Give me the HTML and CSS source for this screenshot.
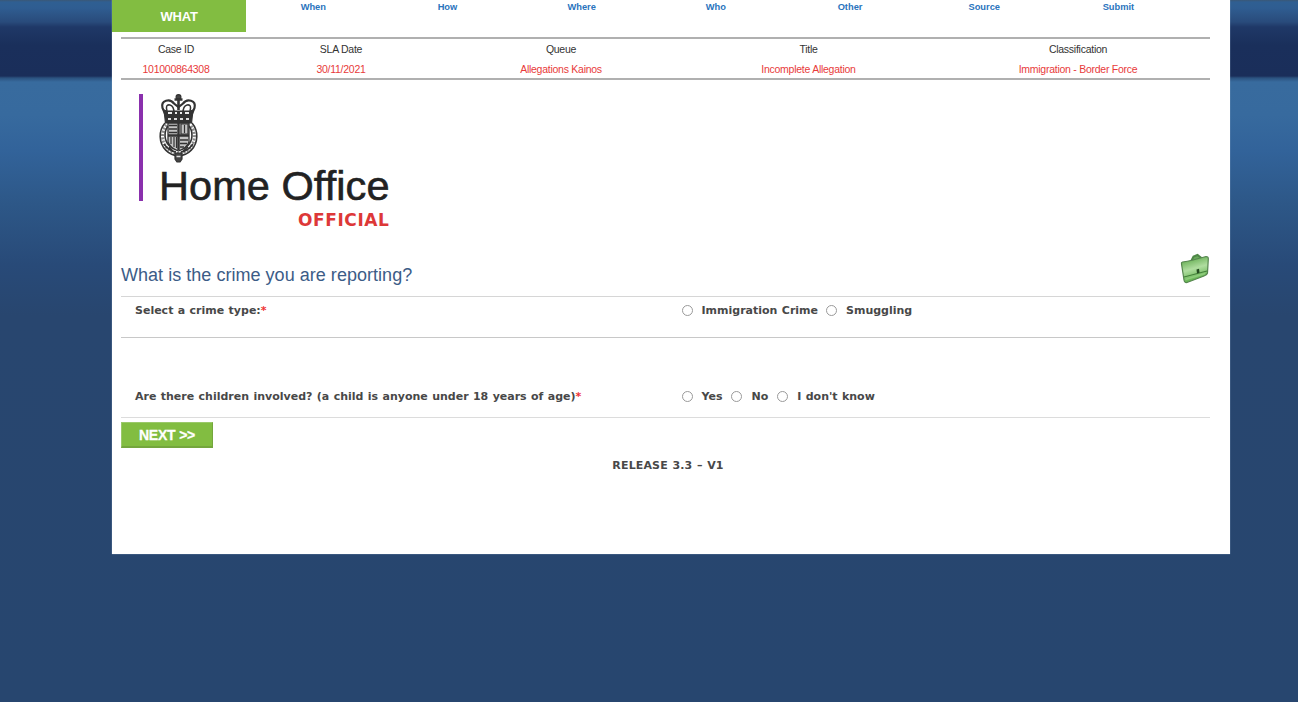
FILE: index.html
```html
<!DOCTYPE html>
<html lang="en">
<head>
<meta charset="utf-8">
<title>Home Office – Report a crime</title>
<link rel="stylesheet" href="styles.css">
</head>
<body>
<main class="page">
  <nav class="steps">
    <a class="step active">WHAT</a>
    <a class="step">When</a>
    <a class="step">How</a>
    <a class="step">Where</a>
    <a class="step">Who</a>
    <a class="step">Other</a>
    <a class="step">Source</a>
    <a class="step">Submit</a>
  </nav>
  <section class="case">
    <div class="cell"><span>Case ID</span><span class="value">101000864308</span></div>
    <div class="cell"><span>SLA Date</span><span class="value">30/11/2021</span></div>
    <div class="cell"><span>Queue</span><span class="value">Allegations Kainos</span></div>
    <div class="cell"><span>Title</span><span class="value">Incomplete Allegation</span></div>
    <div class="cell"><span>Classification</span><span class="value">Immigration - Border Force</span></div>
  </section>
  <header class="brand">
    <div class="logo">
      <svg class="crest" width="40" height="70" viewBox="0 0 40 70" fill="none" stroke="#333" stroke-width="1.2">
        <circle cx="19.500" cy="3" r="2.400" fill="#444"/>
        <path d="M15.500 5.500h8M19.500 4v12" stroke-width="2.600"/>
        <path d="M7 22L3.500 14C1.500 6 11 4 15 9.500L19.500 13L24 9.500C28 4 37.500 6 35.500 14L32 22" stroke-width="2.200"/>
        <path d="M8 17Q6 10 11 11Q15 12 15 19M31 17Q33 10 28 11Q24 12 24 19" stroke-width="1.500"/>
        <path d="M5 16l3 1h23l3-1-1.500 13h-26z" fill="#333"/>
        <path d="M9 19h4m3 0h2m3 0h2m3 0h4" stroke="#eee" stroke-width="2.200"/>
        <path d="M9 25h3m3 0h3m3 0h3m3 0h3" stroke="#ddd" stroke-width="1.800"/>
        <path d="M6 29A18.300 19.500 0 1 0 33 29" stroke-width="1.600"/>
        <path d="M7.500 31A16 17 0 1 0 31.500 31" stroke="#888" stroke-width="3" stroke-dasharray="2 1.300"/>
        <path d="M9 32A13.500 14.500 0 1 0 30 32" stroke-width="1.600"/>
        <path d="M9 29h21v19q-2 6-10.500 9Q11 54 9 48Z" fill="#c4c4c4" stroke-width="1.300"/>
        <path d="M19.500 28v28M9 41.500h21" stroke-width="2.400"/>
        <path d="M10 31.500h8m-8 3.500h8m-8 3.500h8M21 46h8m-8 3.500h7m-7 3.500h4" stroke-width="1.700"/>
        <path d="M22 30h7v10h-7zM25.500 31v8M12 43v7m3-7v10m2.500-10v11"/>
        <path d="M5 50Q10 57 17 58M34 50Q29 57 22 58M10 53l5 5m14-5l-5 4" stroke-width="1.500"/>
        <path d="M16 59h7v6l-2 3h-3l-2-3z" fill="#444"/>
        <path d="M17.500 62.500h4" stroke="#ddd" stroke-width="1.500"/>
      </svg>
      <div class="name">Home Office</div>
    </div>
    <div class="marking">OFFICIAL</div>
  </header>
  <div class="heading">
    <h1>What is the crime you are reporting?</h1>
    <svg class="case-icon" width="30" height="32" viewBox="0 0 30 32">
      <defs>
        <linearGradient id="leather" x1="0" y1="0" x2=".3" y2="1">
          <stop offset="0" stop-color="#4b9d37"/><stop offset=".55" stop-color="#b0dda0"/><stop offset="1" stop-color="#5caf48"/>
        </linearGradient>
      </defs>
      <path d="M11.500 8.500l2-4 4-1.500 4 3" fill="#68a95a" stroke="#4e8747" stroke-width="2"/>
      <path d="M2.500 10Q7 9.500 13 8L26 4.500Q28.500 4.500 28.300 7L27.500 21Q27 23 24 24L7 30.500Q4.500 31 4 28L1.500 12Q1 10.500 2.500 10Z" fill="url(#leather)" stroke="#55854e" stroke-width="1.200"/>
      <path d="M4 25L27 19" stroke="#438139" stroke-width="1.100"/>
      <path d="M5.500 27.500L25 21.500" stroke="#8dcc7b" stroke-width="1.500"/>
      <path d="M16.500 17.500l2.500-.8.500 4-2.500.8z" fill="#244a20"/>
    </svg>
  </div>
  <form class="questions">
    <div class="row first">
      <div class="label">Select a crime type:<em>*</em></div>
      <div class="options">
        <label><i class="radio"></i><span>Immigration Crime</span></label>
        <label><i class="radio"></i><span>Smuggling</span></label>
      </div>
    </div>
    <div class="row second">
      <div class="label">Are there children involved? (a child is anyone under 18 years of age)<em>*</em></div>
      <div class="options">
        <label><i class="radio"></i><span>Yes</span></label>
        <label><i class="radio"></i><span>No</span></label>
        <label><i class="radio"></i><span>I don't know</span></label>
      </div>
    </div>
    <button class="next" type="button">NEXT &gt;&gt;</button>
  </form>
  <footer class="release">RELEASE 3.3 – V1</footer>
</main>
</body>
</html>
```
FILE: styles.css
```css
* { box-sizing: border-box; }
body {
  margin: 0;
  height: 702px;
  overflow: hidden;
  font-family: "Liberation Sans", Arial, sans-serif;
  background: linear-gradient(#3a5876 0, #2f5f92 2px, #2f5d91 8px, #294b7b 22px, #1f3867 27px, #1a2f5b 45px, #1a2e5a 76px, #2b527f 78px, #386b9e 82px, #376a9e 115px, #32639a 150px, #2d5787 205px, #284a78 265px, #28466f 315px, #27466f 100%);
}
.page {
  width: 1118px;
  height: 554px;
  margin-left: 112px;
  background: #fff;
  box-shadow: 0 0 1px #9db4cc;
}
.steps {
  display: grid;
  grid-template-columns: repeat(8, 134.200px);
  height: 37px;
}
.step {
  padding-top: 1px;
  text-align: center;
  font-size: 9.300px;
  line-height: 12px;
  font-weight: bold;
  color: #2a74bd;
}
.step.active {
  height: 32px;
  padding-top: 1px;
  background: #82bd41;
  color: #fff;
  font-size: 13px;
  line-height: 32px;
  letter-spacing: -.15px;
}
.case {
  display: grid;
  grid-template-columns: 110px 220px 220px 275px 264px;
  height: 43px;
  margin: 0 20px 0 9px;
  border-top: 2px solid #b0b0b0;
  border-bottom: 2px solid #b0b0b0;
}
.cell {
  display: flex;
  flex-direction: column;
  align-items: center;
  gap: 7px;
  padding-top: 4px;
  font-size: 10.500px;
  line-height: 13px;
  letter-spacing: -.26px;
  color: #333;
}
.value { color: #e83a3a; }
.brand {
  width: 278px;
  margin: 14px 0 0 27px;
}
.logo {
  height: 107px;
  border-left: 4px solid #8a30ad;
  padding-left: 16px;
}
.crest { display: block; }
.name {
  height: 37px;
  line-height: 44px;
  font-size: 41.500px;
  letter-spacing: .06px;
  white-space: nowrap;
  color: #222;
  -webkit-text-stroke: .6px #222;
}
.marking {
  width: 250.500px;
  height: 36px;
  padding-top: 9px;
  text-align: right;
  font: bold 17px/20px "DejaVu Sans", Verdana, sans-serif;
  letter-spacing: .6px;
  color: #dd3838;
}
.heading {
  display: flex;
  justify-content: space-between;
  align-items: flex-start;
  height: 59px;
  margin: 0 20px 0 9px;
  padding-top: 15px;
}
h1 {
  margin: 11px 0 0;
  font-size: 18px;
  line-height: 24px;
  letter-spacing: .03px;
  font-weight: normal;
  color: #3c5c87;
}
.questions {
  height: 163px;
  margin: 0 20px 0 9px;
  font: bold 11px/14px "DejaVu Sans", Verdana, sans-serif;
  word-spacing: .55px;
  color: #484848;
}
.row {
  display: grid;
  grid-template-columns: 560px 1fr;
  padding-left: 14px;
}
.first {
  height: 42px;
  padding-top: 7px;
  border-top: 1px solid #d6d6d6;
  border-bottom: 1px solid #c8c8c8;
}
.second {
  height: 80px;
  padding-top: 52px;
  border-bottom: 1px solid #dcdcdc;
}
.label, .options { white-space: nowrap; }
em { color: #e33; font-style: normal; }
.options { display: flex; gap: 9px; margin-left: -13.500px; }
.options label { display: flex; gap: 8px; }
.first .options { gap: 8px; }
.radio {
  width: 11px;
  height: 11px;
  margin: 1px 1px 0 0;
  border: 1px solid #9a9a9a;
  border-radius: 50%;
}
.next {
  display: block;
  width: 92px;
  height: 26px;
  margin-top: 4px;
  padding: 0;
  border: 1px solid #9bc96a;
  border-right: 1px solid #74a63d;
  border-bottom: 2px solid #74a63d;
  background: #82bd41;
  color: #fff;
  font: bold 14px/22px "Liberation Sans", Arial, sans-serif;
  letter-spacing: -.2px;
  -webkit-text-stroke: .3px #fff;
}
.release {
  text-align: center;
  margin-left: -6px;
  font: bold 11px/14px "DejaVu Sans", Verdana, sans-serif;
  letter-spacing: .15px;
  word-spacing: .6px;
  color: #484848;
}
```
